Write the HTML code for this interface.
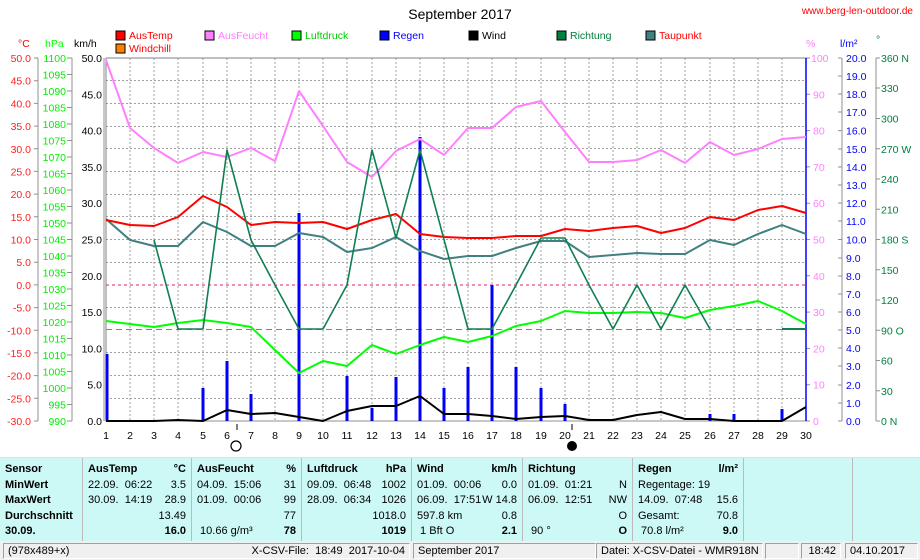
<!DOCTYPE html>
<html><head><meta charset="utf-8"><style>
body{margin:0;width:920px;height:560px;background:#fff;font-family:"Liberation Sans",sans-serif;overflow:hidden;position:relative}
svg text{font-family:"Liberation Sans",sans-serif;font-size:10.5px}
.tb{position:absolute;left:0;top:457px;width:920px;height:84px;background:#ccf8f6;border-top:1px solid #e0e0e0}
.col{position:absolute;top:0;height:84px;border-left:1px solid #bbb;font-size:11px;line-height:15.5px}
.col div{position:relative;height:15.5px;white-space:nowrap}
.r{position:absolute;right:6px;top:0}
.l{position:absolute;left:5px;top:0}
b{font-weight:bold}
.sb{position:absolute;top:541px;left:0;width:920px;height:19px;background:#f0f0f0}
.bx{position:absolute;top:2px;height:16px;border:1px solid #a0a0a0;border-right-color:#fff;border-bottom-color:#fff;font-size:11px;line-height:15px;box-sizing:border-box;padding:0 4px;white-space:nowrap}
</style></head><body>
<svg width="920" height="457" style="position:absolute;left:0;top:0">
<text x="460" y="19" text-anchor="middle" style="font-size:14px">September 2017</text>
<text x="913" y="14" text-anchor="end" fill="#ff0000" style="font-size:10px">www.berg-len-outdoor.de</text>
<g style="font-size:11px">
<rect x="116" y="31" width="9" height="9" fill="#f00" stroke="#000"/><text x="129" y="39" fill="#f00">AusTemp</text>
<rect x="116" y="44" width="9" height="9" fill="#ff8000" stroke="#000"/><text x="129" y="52" fill="#f00">Windchill</text>
<rect x="205" y="31" width="9" height="9" fill="#ff80ff" stroke="#000"/><text x="218" y="39" fill="#ff80ff">AusFeucht</text>
<rect x="292" y="31" width="9" height="9" fill="#0f0" stroke="#000"/><text x="305" y="39" fill="#0c0">Luftdruck</text>
<rect x="380" y="31" width="9" height="9" fill="#00f" stroke="#000"/><text x="393" y="39" fill="#00f">Regen</text>
<rect x="469" y="31" width="9" height="9" fill="#000" stroke="#000"/><text x="482" y="39">Wind</text>
<rect x="557" y="31" width="9" height="9" fill="#008040" stroke="#000"/><text x="570" y="39" fill="#008040">Richtung</text>
<rect x="646" y="31" width="9" height="9" fill="#408080" stroke="#000"/><text x="659" y="39" fill="#f00">Taupunkt</text>
</g>
<text x="18" y="47" fill="#f00">°C</text>
<text x="45" y="47" fill="#0f0">hPa</text>
<text x="74" y="47">km/h</text>
<text x="806" y="47" fill="#ff80ff">%</text>
<text x="840" y="47" fill="#00f">l/m²</text>
<text x="876" y="43" fill="#008040">°</text>
<g stroke="#a0a0a0" stroke-dasharray="2,2" stroke-width="1">
<path d="M130 58V421M154 58V421M178 58V421M203 58V421M227 58V421M251 58V421M275 58V421M299 58V421M323 58V421M347 58V421M372 58V421M396 58V421M420 58V421M444 58V421M468 58V421M492 58V421M516 58V421M541 58V421M565 58V421M589 58V421M613 58V421M637 58V421M661 58V421M685 58V421M710 58V421M734 58V421M758 58V421M782 58V421"/>
<path d="M106 80.5H806M106 103.5H806M106 126.5H806M106 148.5H806M106 171.5H806M106 194.5H806M106 216.5H806M106 239.5H806M106 262.5H806M106 307.5H806M106 352.5H806M106 375.5H806M106 398.5H806"/>
</g>
<path d="M106 285H806" stroke="#e0206a" stroke-dasharray="3,3"/>
<path d="M106 329.5H806" stroke="#00e000" stroke-dasharray="6,4"/>
<g stroke="#909090" fill="none">
<path d="M38 58V421M72 58V421M104 58V421M842 58V421M876 58V421"/>
<path d="M34 58H38M34 80.7H38M34 103.4H38M34 126.1H38M34 148.8H38M34 171.4H38M34 194.1H38M34 216.8H38M34 239.5H38M34 262.2H38M34 284.9H38M34 307.6H38M34 330.3H38M34 352.9H38M34 375.6H38M34 398.3H38M34 421H38"/>
<path d="M67 58H72M67 74.5H72M67 91H72M67 107.5H72M67 124H72M67 140.5H72M67 157H72M67 173.5H72M67 190H72M67 206.5H72M67 223H72M67 239.5H72M67 256H72M67 272.5H72M67 289H72M67 305.5H72M67 322H72M67 338.5H72M67 355H72M67 371.5H72M67 388H72M67 404.5H72M67 421H72"/>
<path d="M806 58H810M806 94.3H810M806 130.6H810M806 166.9H810M806 203.2H810M806 239.5H810M806 275.8H810M806 312.1H810M806 348.4H810M806 384.7H810M806 421H810"/>
<path d="M838 58H842M838 76H842M838 94H842M838 112H842M838 130.6H842M838 149H842M838 167H842M838 185H842M838 203H842M838 221H842M838 239.5H842M838 258H842M838 276H842M838 294H842M838 312H842M838 330H842M838 348H842M838 366H842M838 385H842M838 403H842M838 421H842"/>
<path d="M876 58H880M876 88H880M876 118.5H880M876 148.8H880M876 179H880M876 209.3H880M876 239.5H880M876 269.8H880M876 300H880M876 330.3H880M876 360.5H880M876 390.8H880M876 421H880"/>
</g>
<path d="M106 421H806" stroke="#909090"/>
<path d="M106 58V421" stroke="#808080"/>
<path d="M106 58H806" stroke="#808080"/>
<path d="M806 58V421" stroke="#0000ff" stroke-width="1.5"/>
<g fill="#ff2020" text-anchor="end">
<text x="31" y="62">50.0</text><text x="31" y="84.7">45.0</text><text x="31" y="107.4">40.0</text><text x="31" y="130.1">35.0</text><text x="31" y="152.8">30.0</text><text x="31" y="175.4">25.0</text><text x="31" y="198.1">20.0</text><text x="31" y="220.8">15.0</text><text x="31" y="243.5">10.0</text><text x="31" y="266.2">5.0</text><text x="31" y="288.9">0.0</text><text x="31" y="311.6">-5.0</text><text x="31" y="334.3">-10.0</text><text x="31" y="356.9">-15.0</text><text x="31" y="379.6">-20.0</text><text x="31" y="402.3">-25.0</text><text x="31" y="425">-30.0</text>
</g>
<g fill="#00ee00" text-anchor="end">
<text x="66" y="62">1100</text><text x="66" y="78.5">1095</text><text x="66" y="95">1090</text><text x="66" y="111.5">1085</text><text x="66" y="128">1080</text><text x="66" y="144.5">1075</text><text x="66" y="161">1070</text><text x="66" y="177.5">1065</text><text x="66" y="194">1060</text><text x="66" y="210.5">1055</text><text x="66" y="227">1050</text><text x="66" y="243.5">1045</text><text x="66" y="260">1040</text><text x="66" y="276.5">1035</text><text x="66" y="293">1030</text><text x="66" y="309.5">1025</text><text x="66" y="326">1020</text><text x="66" y="342.5">1015</text><text x="66" y="359">1010</text><text x="66" y="375.5">1005</text><text x="66" y="392">1000</text><text x="66" y="408.5">995</text><text x="66" y="425">990</text>
</g>
<g text-anchor="end">
<text x="102" y="62">50.0</text><text x="102" y="98.3">45.0</text><text x="102" y="134.6">40.0</text><text x="102" y="170.9">35.0</text><text x="102" y="207.2">30.0</text><text x="102" y="243.5">25.0</text><text x="102" y="279.8">20.0</text><text x="102" y="316.1">15.0</text><text x="102" y="352.4">10.0</text><text x="102" y="388.7">5.0</text><text x="102" y="425">0.0</text>
</g>
<g fill="#ff80ff">
<text x="811" y="62">100</text><text x="813" y="98.3">90</text><text x="813" y="134.6">80</text><text x="813" y="170.9">70</text><text x="813" y="207.2">60</text><text x="813" y="243.5">50</text><text x="813" y="279.8">40</text><text x="813" y="316.1">30</text><text x="813" y="352.4">20</text><text x="813" y="388.7">10</text><text x="813" y="425">0</text>
</g>
<g fill="#0000ff">
<text x="846" y="62">20.0</text><text x="846" y="80">19.0</text><text x="846" y="98">18.0</text><text x="846" y="116">17.0</text><text x="846" y="134.6">16.0</text><text x="846" y="153">15.0</text><text x="846" y="171">14.0</text><text x="846" y="189">13.0</text><text x="846" y="207">12.0</text><text x="846" y="225">11.0</text><text x="846" y="243.5">10.0</text><text x="846" y="262">9.0</text><text x="846" y="280">8.0</text><text x="846" y="298">7.0</text><text x="846" y="316">6.0</text><text x="846" y="334">5.0</text><text x="846" y="352">4.0</text><text x="846" y="370">3.0</text><text x="846" y="389">2.0</text><text x="846" y="407">1.0</text><text x="846" y="425">0.0</text>
</g>
<g fill="#008040">
<text x="881" y="62">360 N</text><text x="881" y="92">330</text><text x="881" y="122.5">300</text><text x="881" y="152.8">270 W</text><text x="881" y="183">240</text><text x="881" y="213.3">210</text><text x="881" y="243.5">180 S</text><text x="881" y="273.8">150</text><text x="881" y="304">120</text><text x="881" y="334.3">90  O</text><text x="881" y="364.5">60</text><text x="881" y="394.8">30</text><text x="881" y="425">0   N</text>
</g>
<g text-anchor="middle" style="font-size:11px">
<text x="106" y="439">1</text><text x="130" y="439">2</text><text x="154" y="439">3</text><text x="178" y="439">4</text><text x="203" y="439">5</text><text x="227" y="439">6</text><text x="251" y="439">7</text><text x="275" y="439">8</text><text x="299" y="439">9</text><text x="323" y="439">10</text><text x="347" y="439">11</text><text x="372" y="439">12</text><text x="396" y="439">13</text><text x="420" y="439">14</text><text x="444" y="439">15</text><text x="468" y="439">16</text><text x="492" y="439">17</text><text x="516" y="439">18</text><text x="541" y="439">19</text><text x="565" y="439">20</text><text x="589" y="439">21</text><text x="613" y="439">22</text><text x="637" y="439">23</text><text x="661" y="439">24</text><text x="685" y="439">25</text><text x="710" y="439">26</text><text x="734" y="439">27</text><text x="758" y="439">28</text><text x="782" y="439">29</text><text x="806" y="439">30</text>
</g>
<path d="M237 424V430M572 424V430" stroke="#000"/>
<circle cx="236" cy="446" r="5" fill="none" stroke="#000" stroke-width="1.2"/>
<circle cx="572" cy="446" r="5" fill="#000"/>
<g stroke="#0000ff" stroke-width="3">
<path d="M107 354V421M203 388V421M227 361V421M251 394V421M299 213V421M347 376V421M372 408V421M396 377V421M420 137V421M444 388V421M468 367V421M492 285V421M516 367V421M541 388V421M565 404V421M710 414V421M734 414V421M782 409V421"/>
</g>
<g fill="none" stroke-width="2" stroke-linejoin="round">
<polyline stroke="#000" points="106,421 154,421 178,420 203,421 227,410 251,414 275,413 299,417 323,421 347,411 372,406 396,406 420,396 444,414 468,414 492,416 516,419 541,417 565,416 589,420 613,420 637,415 661,412 685,419 710,419 734,421 782,421 806,407"/>
<polyline stroke="#00ff00" points="106,321 130,324 154,327 178,323 203,320 227,323 251,327 275,350 299,373 323,361 347,366 372,345 396,354 420,345 444,337 468,342 492,336 516,326 541,321 565,311 589,313 613,313 637,312 661,313 685,318 710,310 734,306 758,301 782,311 806,324"/>
<polyline stroke="#408080" points="106,219 130,240 154,246 178,246 203,222 227,232 251,246 275,246 299,233 323,237 347,252 372,248 396,237 420,251 444,259 468,256 492,256 516,248 541,241 565,241 589,257 613,255 637,253 661,254 685,254 710,240 734,245 758,234 782,225 806,234"/>
<polyline stroke="#ff0000" points="106,220 130,225 154,226 178,217 203,196 227,207 251,225 275,222 299,223 323,222 347,229 372,220 396,214 420,234 444,237 468,238 492,238 516,236 541,236 565,229 589,231 613,228 637,226 661,233 685,228 710,217 734,220 758,210 782,206 806,213"/>
<polyline stroke="#ff80ff" points="106,60 130,128 154,148 178,163 203,152 227,157 251,148 275,161 299,91 323,126 347,162 372,177 396,151 420,139 444,155 468,128 492,128 516,107 541,101 565,132 589,162 613,162 637,160 661,150 685,163 710,142 734,155 758,149 782,139 806,137"/>
<polyline stroke="#108050" stroke-width="1.6" points="154,240 178,329 203,329 227,150 251,240 275,285 299,329 323,329 347,285 372,150 396,238 420,150 468,329 492,329 516,285 541,238 565,238 589,285 613,329 637,285 661,329 685,285 710,329"/>
<path d="M782 329H806" stroke="#108050" stroke-width="2"/>
</g>
</svg>
<div class="tb">
<div class="col" style="left:0;width:82px;border:none"><div style="height:4px"></div>
<div><b class="l">Sensor</b></div><div><b class="l">MinWert</b></div><div><b class="l">MaxWert</b></div><div><b class="l">Durchschnitt</b></div><div><b class="l">30.09.</b></div></div>
<div class="col" style="left:82px;width:109px"><div style="height:4px"></div>
<div><b class="l">AusTemp</b><b class="r">°C</b></div><div><span class="l">22.09.&nbsp; 06:22</span><span class="r">3.5</span></div><div><span class="l">30.09.&nbsp; 14:19</span><span class="r">28.9</span></div><div><span class="r">13.49</span></div><div><b class="r">16.0</b></div></div>
<div class="col" style="left:191px;width:110px"><div style="height:4px"></div>
<div><b class="l">AusFeucht</b><b class="r">%</b></div><div><span class="l">04.09.&nbsp; 15:06</span><span class="r">31</span></div><div><span class="l">01.09.&nbsp; 00:06</span><span class="r">99</span></div><div><span class="r">77</span></div><div><span class="l">&nbsp;10.66 g/m³</span><b class="r">78</b></div></div>
<div class="col" style="left:301px;width:110px"><div style="height:4px"></div>
<div><b class="l">Luftdruck</b><b class="r">hPa</b></div><div><span class="l">09.09.&nbsp; 06:48</span><span class="r">1002</span></div><div><span class="l">28.09.&nbsp; 06:34</span><span class="r">1026</span></div><div><span class="r">1018.0</span></div><div><b class="r">1019</b></div></div>
<div class="col" style="left:411px;width:111px"><div style="height:4px"></div>
<div><b class="l">Wind</b><b class="r">km/h</b></div><div><span class="l">01.09.&nbsp; 00:06</span><span class="r">0.0</span></div><div><span class="l">06.09.&nbsp; 17:51</span><span class="r">W 14.8</span></div><div><span class="l">597.8 km</span><span class="r">0.8</span></div><div><span class="l">&nbsp;1 Bft O</span><b class="r">2.1</b></div></div>
<div class="col" style="left:522px;width:110px"><div style="height:4px"></div>
<div><b class="l">Richtung</b></div><div><span class="l">01.09.&nbsp; 01:21</span><span class="r">N</span></div><div><span class="l">06.09.&nbsp; 12:51</span><span class="r">NW</span></div><div><span class="r">O</span></div><div><span class="l">&nbsp;90 °</span><b class="r">O</b></div></div>
<div class="col" style="left:632px;width:111px"><div style="height:4px"></div>
<div><b class="l">Regen</b><b class="r">l/m²</b></div><div><span class="l">Regentage: 19</span></div><div><span class="l">14.09.&nbsp; 07:48</span><span class="r">15.6</span></div><div><span class="l">Gesamt:</span><span class="r">70.8</span></div><div><span class="l">&nbsp;70.8 l/m²</span><b class="r">9.0</b></div></div>
<div class="col" style="left:743px;width:109px"></div>
<div class="col" style="left:852px;width:68px"></div>
</div>
<div class="sb">
<div class="bx" style="left:3px;width:407px">(978x489+x)<span style="position:absolute;right:4px">X-CSV-File:&nbsp; 18:49&nbsp; 2017-10-04</span></div>
<div class="bx" style="left:413px;width:183px">September 2017</div>
<div class="bx" style="left:596px;width:167px">Datei: X-CSV-Datei - WMR918N</div>
<div class="bx" style="left:765px;width:34px"></div>
<div class="bx" style="left:801px;width:40px;text-align:right">18:42</div>
<div class="bx" style="left:845px;width:73px">04.10.2017</div>
</div>
</body></html>
